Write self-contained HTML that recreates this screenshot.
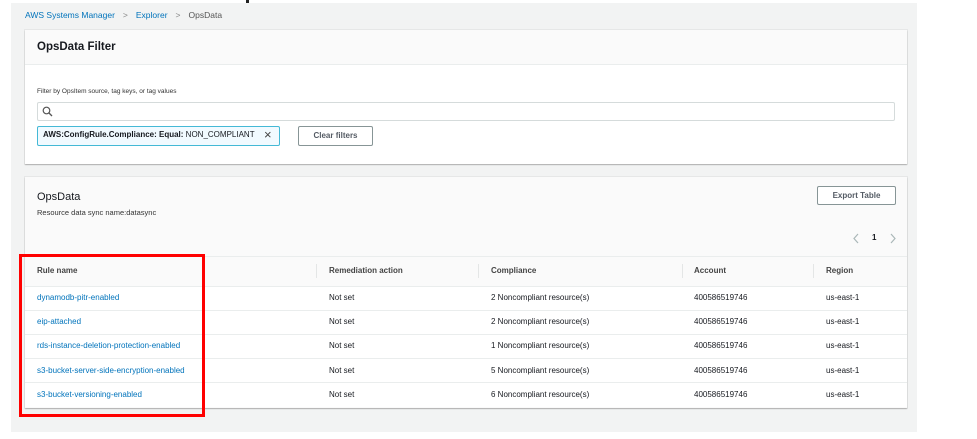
<!DOCTYPE html>
<html><head><style>
*{margin:0;padding:0;box-sizing:border-box}
body{width:977px;height:439px;background:#fff;font-family:"Liberation Sans",sans-serif;position:relative;overflow:hidden;color:#16191f}
.a{position:absolute;white-space:nowrap}
.bg{left:11px;top:3px;width:906px;height:429px;background:#f2f3f3}
.p{background:#fff;box-shadow:0 1px 1px rgba(0,0,0,.25),0 0 0 1px #e6e7e7}
.lnk{color:#0073bb}
.t{font-size:8.5px}
.row{left:25px;width:882px;height:24px;border-top:1px solid #eaeded;background:#fff}
.sep{width:1px;height:14px;background:#e4e6e6;top:264px}
</style></head><body>
<div class="a" style="left:246px;top:0;width:3px;height:3px;background:#222"></div>
<div class="a bg"></div>
<div class="a t" style="left:25px;top:10px;font-size:8.5px"><span class="lnk">AWS Systems Manager</span><span style="color:#888;margin:0 8px">&gt;</span><span class="lnk">Explorer</span><span style="color:#888;margin:0 8px">&gt;</span><span style="color:#555">OpsData</span></div>

<div class="a p" style="left:25px;top:30px;width:882px;height:134px"></div>
<div class="a" style="left:25px;top:30px;width:882px;height:35px;background:#fafafa;border-bottom:1px solid #eaeded"></div>
<div class="a" style="left:37px;top:41px;font-size:11.5px;font-weight:bold">OpsData Filter</div>
<div class="a" style="left:37px;top:88px;font-size:6.5px;color:#333">Filter by OpsItem source, tag keys, or tag values</div>
<div class="a" style="left:37px;top:102px;width:858px;height:19px;border:1px solid #d5dbdb;border-radius:2px;background:#fff"></div>
<svg class="a" style="left:42px;top:106px" width="11" height="11" viewBox="0 0 11 11"><circle cx="4.5" cy="4.5" r="3.3" fill="none" stroke="#555" stroke-width="1.2"/><path d="M7 7l3 3" stroke="#555" stroke-width="1.3"/></svg>
<div class="a" style="left:37px;top:126px;width:243px;height:20px;border:1px solid #44b9d6;background:#f1faff;border-radius:2px"></div>
<div class="a" style="left:43px;top:130px;font-size:8px"><b>AWS:ConfigRule.Compliance: Equal:</b> NON_COMPLIANT</div>
<div class="a" style="left:264px;top:127px;font-size:13px;color:#444">×</div>
<div class="a" style="left:298px;top:126px;width:75px;height:20px;border:1px solid #879596;border-radius:2px;background:#fff;font-size:8px;font-weight:bold;color:#545b64;text-align:center;line-height:18px">Clear filters</div>

<div class="a p" style="left:25px;top:177px;width:882px;height:231px;background:#fafafa"></div>
<div class="a" style="left:37px;top:191px;font-size:11px">OpsData</div>
<div class="a" style="left:37px;top:208px;font-size:7.5px;color:#333">Resource data sync name:datasync</div>
<div class="a" style="left:817px;top:186px;width:79px;height:19px;border:1px solid #879596;border-radius:2px;background:#fff;font-size:8px;font-weight:bold;color:#545b64;text-align:center;line-height:17px">Export Table</div>
<svg class="a" style="left:852px;top:233px" width="45" height="11" viewBox="0 0 45 11"><path d="M6 1L2 5.5L6 10M39 1L43 5.5L39 10" fill="none" stroke="#aab7b8" stroke-width="1.2"/></svg>
<div class="a" style="left:872px;top:233px;font-size:8px;font-weight:bold">1</div>

<div class="a" style="left:25px;top:256px;width:882px;height:30px;background:#fafafa;border-top:1px solid #eaeded"></div>
<div class="a sep" style="left:316px"></div><div class="a sep" style="left:478px"></div><div class="a sep" style="left:682px"></div><div class="a sep" style="left:813px"></div>
<div class="a" style="top:266px;left:37px;font-size:8px;color:#444;font-weight:bold">Rule name</div>
<div class="a" style="top:266px;left:329px;font-size:8px;color:#444;font-weight:bold">Remediation action</div>
<div class="a" style="top:266px;left:491px;font-size:8px;color:#444;font-weight:bold">Compliance</div>
<div class="a" style="top:266px;left:694px;font-size:8px;color:#444;font-weight:bold">Account</div>
<div class="a" style="top:266px;left:826px;font-size:8px;color:#444;font-weight:bold">Region</div>

<div class="a row" style="top:286px"></div>
<div class="a row" style="top:310px"></div>
<div class="a row" style="top:334px"></div>
<div class="a row" style="top:358px"></div>
<div class="a row" style="top:382px;height:25px"></div>

<div class="a" style="left:0;top:286px;font-size:8px;line-height:24.2px">
<div style="position:absolute;left:37px" class="lnk">dynamodb-pitr-enabled<br>eip-attached<br>rds-instance-deletion-protection-enabled<br>s3-bucket-server-side-encryption-enabled<br>s3-bucket-versioning-enabled</div>
<div style="position:absolute;left:329px">Not set<br>Not set<br>Not set<br>Not set<br>Not set</div>
<div style="position:absolute;left:491px">2 Noncompliant resource(s)<br>2 Noncompliant resource(s)<br>1 Noncompliant resource(s)<br>5 Noncompliant resource(s)<br>6 Noncompliant resource(s)</div>
<div style="position:absolute;left:694px">400586519746<br>400586519746<br>400586519746<br>400586519746<br>400586519746</div>
<div style="position:absolute;left:826px">us-east-1<br>us-east-1<br>us-east-1<br>us-east-1<br>us-east-1</div>
</div>

<div class="a" style="left:19px;top:254px;width:186px;height:163px;border:3px solid #f00"></div>
</body></html>
